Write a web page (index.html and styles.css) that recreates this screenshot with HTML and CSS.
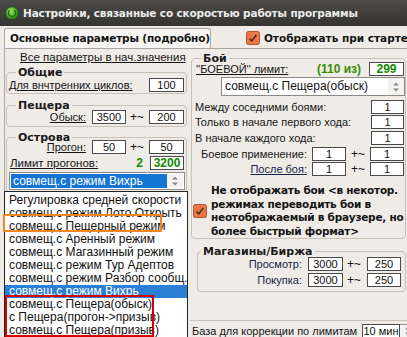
FILE: index.html
```html
<!DOCTYPE html>
<html lang="ru">
<head>
    <meta charset="UTF-8">
    <title>Настройки</title>
    <link rel="stylesheet" href="styles.css">
</head>
<body>
    <div class="titlebar">
        <svg class="app-icon" viewBox="0 0 14 14">
            <defs>
                <radialGradient id="ball" cx="40%" cy="35%" r="65%">
                    <stop offset="0" stop-color="#9be36a"/>
                    <stop offset="1" stop-color="#2d8c14"/>
                </radialGradient>
            </defs>
            <circle cx="7" cy="7" r="6.3" fill="url(#ball)" stroke="#1b560b" stroke-width="0.9"/>
            <path d="M4.6 4.2a3.6 3.6 0 1 0 4.8 0" fill="none" stroke="#1f6a0e" stroke-width="1.3"/>
        </svg>
        <span class="title">Настройки, связанные со скоростью работы программы</span>
    </div>

    <div class="window">
        <div class="tabs">
            <div class="tab">Основные параметры (подробно)</div>
            <div class="check check-start">
                <svg class="box" viewBox="0 0 14 14"><rect x=".5" y=".5" width="13" height="13" rx="2" fill="#ec7646" stroke="#b05530"/><path d="M3.6 7.4l2.1 2.6 4.6-6" fill="none" stroke="#4a3024" stroke-width="1.6"/></svg>
                <span>Отображать при старте</span>
            </div>
        </div>

        <div class="panel">
            <div class="col-left">
                <a class="reset">Все параметры в нач.значения</a>

                <div class="group g-common">
                    <div class="legend">Общие</div>
                    <div class="row row-common">
                        <span class="u">Для внчтренних циклов:</span>
                        <span class="field">100</span>
                    </div>
                </div>

                <div class="group g-cave">
                    <div class="legend">Пещера</div>
                    <div class="row row-pair">
                        <span class="lbl"><span class="u">Обыск:</span></span>
                        <span class="field">3500</span>
                        <span class="plus">+~</span>
                        <span class="field">200</span>
                    </div>
                </div>

                <div class="group g-isles">
                    <div class="legend">Острова</div>
                    <div class="row row-pair row-run">
                        <span class="lbl"><span class="u">Прогон:</span></span>
                        <span class="field">50</span>
                        <span class="plus">+~</span>
                        <span class="field">50</span>
                    </div>
                    <div class="row row-limit">
                        <span class="u">Лимит прогонов:</span>
                        <span class="green count">2</span>
                        <span class="field green">3200</span>
                    </div>
                    <div class="select select-blue">
                        <span class="select-text">совмещ.с режим Вихрь</span>
                        <span class="spin">
                            <svg viewBox="0 0 8 12"><path d="M1 4.5L4 1.5 7 4.5zM1 7.5L4 10.5 7 7.5z" fill="#8a8a8a"/></svg>
                        </span>
                    </div>
                </div>
            </div>

            <div class="col-right">
                <div class="group g-fight">
                    <div class="legend">Бой</div>
                    <div class="row row-fight">
                        <span class="u">''БОЕВОЙ'' лимит:</span>
                        <span class="olive">(110 из)</span>
                        <span class="field green">299</span>
                    </div>
                    <div class="select select-white">
                        <span class="select-text">совмещ.с Пещера(обыск)</span>
                        <span class="spin">
                            <svg viewBox="0 0 8 12"><path d="M1 4.5L4 1.5 7 4.5zM1 7.5L4 10.5 7 7.5z" fill="#8a8a8a"/></svg>
                        </span>
                    </div>
                    <div class="row row-one r1">
                        <span>Между соседними боями:</span>
                        <span class="field">1</span>
                    </div>
                    <div class="row row-one r2">
                        <span>Только в начале первого хода:</span>
                        <span class="field">1</span>
                    </div>
                    <div class="row row-one r3">
                        <span>В начале каждого хода:</span>
                        <span class="field">1</span>
                    </div>
                    <div class="row row-quad r3">
                        <span class="lbl">Боевое применение:</span>
                        <span class="field">1</span>
                        <span class="plus">+~</span>
                        <span class="field">1</span>
                    </div>
                    <div class="row row-quad r2">
                        <span class="lbl navy"><span class="u">После боя:</span></span>
                        <span class="field">1</span>
                        <span class="plus">+~</span>
                        <span class="field">1</span>
                    </div>
                    <div class="check check-fast">
                        <svg class="box" viewBox="0 0 14 14"><rect x=".5" y=".5" width="13" height="13" rx="2" fill="#ec7646" stroke="#b05530"/><path d="M3.6 7.4l2.1 2.6 4.6-6" fill="none" stroke="#4a3024" stroke-width="1.6"/></svg>
                        <span>Не отображать бои &lt;в некотор.<br>режимах переводить бои в<br>неотображаемый в браузере, но<br>более быстрый формат&gt;</span>
                    </div>
                </div>

                <div class="group g-shop">
                    <div class="legend">Магазины/Биржа</div>
                    <div class="row row-shop s1">
                        <span class="lbl navy">Просмотр:</span>
                        <span class="field">3000</span>
                        <span class="plus">+~</span>
                        <span class="field">250</span>
                    </div>
                    <div class="row row-shop s2">
                        <span class="lbl navy">Покупка:</span>
                        <span class="field">3000</span>
                        <span class="plus">+~</span>
                        <span class="field">250</span>
                    </div>
                </div>

                <div class="sep"></div>
                <div class="row row-base">
                    <span>База для коррекции по лимитам</span>
                    <span class="field">10 мин</span>
                    <span class="spin spin-base">
                        <svg viewBox="0 0 8 12"><path d="M1 4.5L4 1.5 7 4.5zM1 7.5L4 10.5 7 7.5z" fill="#8a8a8a"/></svg>
                    </span>
                </div>
            </div>
        </div>

        <!-- open dropdown of the "Острова" select -->
        <ul class="dropdown">
            <li>Регулировка средней скорости</li>
            <li>совмещ.с режим Лото.Открыть</li>
            <li>совмещ.с Пещерный режим</li>
            <li>совмещ.с Аренный режим</li>
            <li>совмещ.с Магазинный режим</li>
            <li>совмещ.с режим Тур Адептов</li>
            <li>совмещ.с режим Разбор сообщ.</li>
            <li class="active">совмещ.с режим Вихрь</li>
            <li>совмещ.с Пещера(обыск)</li>
            <li>с Пещера(прогон-&gt;призыв)</li>
            <li>совмещ.с Пещера(призыв)</li>
            <li class="mark mark-orange"></li>
            <li class="mark mark-red"></li>
        </ul>
    </div>
</body>
</html>
```

FILE: styles.css
```css
* {
    box-sizing: border-box;
}
body {
    margin: 0;
    width: 407px;
    height: 337px;
    overflow: hidden;
    background-color: #efece8;
    font-family: "Liberation Sans", Arial, sans-serif;
    font-size: 11px;
    color: #141414;
}
.titlebar {
    height: 26px;
    display: flex;
    align-items: center;
    gap: 4px;
    padding-left: 5px;
    background: linear-gradient(#4b4a47, #353432);
}
.app-icon {
    width: 14px;
    height: 14px;
}
.title {
    color: #ececec;
    font-family: "DejaVu Sans", sans-serif;
    font-weight: bold;
    font-size: 10.5px;
    letter-spacing: -0.15px;
    white-space: nowrap;
}
.window {
    position: relative;
    height: 311px;
    overflow: hidden;
}
.tabs {
    height: 22px;
    display: flex;
    align-items: flex-end;
    white-space: nowrap;
    overflow: hidden;
}
.tab {
    position: relative;
    z-index: 1;
    margin-left: 4px;
    margin-bottom: -1px;
    width: 213px;
    height: 21px;
    padding-left: 5px;
    border: 1px solid #aba79f;
    border-bottom: none;
    border-radius: 3px 3px 0 0;
    background-color: #f6f5f3;
    font-family: "DejaVu Sans", sans-serif;
    font-weight: bold;
    font-size: 10.5px;
    letter-spacing: -0.15px;
    line-height: 19px;
}
.check {
    display: flex;
    align-items: center;
    gap: 4px;
    font-family: "DejaVu Sans", sans-serif;
    font-weight: bold;
    font-size: 10.5px;
    white-space: nowrap;
}
.check .box {
    width: 14px;
    height: 14px;
    flex: none;
}
.check-start {
    align-self: center;
    margin-left: 35px;
    margin-top: 2px;
}
.panel {
    display: flex;
    margin-left: 4px;
    height: 289px;
    overflow: hidden;
    border-top: 1px solid #aba79f;
    border-left: 1px solid #aba79f;
}

/* left column */
.col-left {
    width: 185px;
    flex: none;
    padding-top: 2px;
}
.reset {
    display: block;
    height: 12px;
    line-height: 12px;
    padding-left: 15px;
    font-size: 11.5px;
    white-space: nowrap;
    text-decoration: underline;
}
.u {
    text-decoration: underline;
}
.group {
    padding: 0 2px;
    border: 1px solid #c6c2ba;
    border-radius: 4px;
}
.legend {
    display: table;
    margin: -6px 0 0 7px;
    padding: 0 2px;
    background-color: #efece8;
    font-family: "DejaVu Sans", sans-serif;
    font-weight: bold;
    font-size: 11px;
    line-height: 11px;
    color: #1a1a1a;
}
.row {
    display: grid;
    align-items: center;
    white-space: nowrap;
}
.field {
    display: block;
    height: 100%;
    background-color: #fff;
    border: 1px solid #4a4a4a;
    text-align: center;
    line-height: 12px;
    color: #111;
}
.plus {
    padding-left: 4px;
    font-size: 12px;
}
.lbl {
    text-align: right;
    padding-right: 6px;
}
.green {
    color: #108a00;
    font-weight: bold;
    font-size: 12px;
}
.olive {
    color: #3a8c00;
    font-weight: bold;
    font-size: 12px;
    padding-right: 8px;
}
.navy {
    color: #16234a;
}

.g-common {
    margin: 9px 3px 0 1px;
    padding-bottom: 1px;
}
.row-common {
    grid-template-columns: 1fr 35px;
    height: 14px;
}
.g-cave {
    margin: 11px 3px 0 1px;
    padding-bottom: 2px;
}
.row-pair {
    grid-template-columns: 1fr 34px 23px 35px;
    height: 14px;
    margin-top: -1px;
}
.g-isles {
    margin: 10px 3px 0 1px;
    padding-bottom: 150px;
}
.row-run {
    margin-top: -3px;
}
.row-limit {
    grid-template-columns: 1fr auto 34px;
    height: 13px;
    margin-top: 2px;
    padding-left: 1px;
}
.row-limit .u {
    font-size: 11.5px;
}
.count {
    padding-right: 7px;
}
.select {
    display: flex;
    align-items: stretch;
    height: 18px;
    border: 1px solid #8d8a85;
    background-color: #fff;
    white-space: nowrap;
}
.select-blue {
    margin: 3px -1px 0 0;
    padding: 1px;
}
.select-blue .select-text {
    background-color: #1475d5;
    color: #fff;
}
.select-text {
    flex: 1;
    padding-left: 2px;
    line-height: 15px;
    font-size: 12px;
}
.spin {
    width: 16px;
    display: flex;
    align-items: center;
    justify-content: center;
    background-color: #f4f3f1;
}
.spin svg {
    width: 8px;
    height: 12px;
}
.spin-base {
    height: 100%;
    border: 1px solid #9a9792;
    border-left: none;
}

/* right column */
.col-right {
    flex: 1;
    min-width: 0;
}
.g-fight {
    margin: 9px 1px 0 1px;
    padding: 0 1px 0 3px;
}
.g-fight .legend {
    margin-left: 6px;
}
.row-fight {
    grid-template-columns: 1fr auto 35px;
    height: 13px;
    margin-top: -2px;
    padding-left: 1px;
}
.select-white {
    height: 19px;
    margin: 2px -1px 0 26px;
}
.select-white .select-text {
    line-height: 17px;
    padding-left: 3px;
}
.row-one {
    grid-template-columns: 1fr 33px;
    height: 13px;
}
.row-quad {
    grid-template-columns: 1fr 34px 24px 34px;
    height: 13px;
}
.row-quad .lbl {
    padding-right: 5px;
}
.row-quad .plus {
    padding-left: 5px;
}
.r1 {
    margin-top: 4px;
}
.r2 {
    margin-top: 2px;
}
.r3 {
    margin-top: 3px;
}
.check-fast {
    margin: 9px 0 0 -2px;
    line-height: 13.5px;
    letter-spacing: -0.25px;
}

.g-shop {
    margin: 12px 1px 0 7px;
    padding: 0 4px 4px 2px;
}
.g-shop .legend {
    margin-left: 1px;
}
.row-shop {
    grid-template-columns: 1fr 35px 24px 34px;
    height: 14px;
}
.s2 {
    margin-top: 2px;
}
.sep {
    height: 1px;
    margin-top: 28px;
    background-color: #c6c2ba;
}
.row-base {
    grid-template-columns: 1fr 38px 14px;
    height: 14px;
    margin: 3px -7px 0 2px;
}

/* dropdown list */
.dropdown {
    position: absolute;
    left: 4px;
    top: 165px;
    width: 184px;
    height: 150px;
    margin: 0;
    padding: 2px 0 0 0;
    list-style: none;
    background-color: #fff;
    border: 1px solid #222;
    font-size: 12px;
}
.dropdown li {
    height: 13px;
    line-height: 13px;
    padding-left: 4px;
    white-space: nowrap;
    color: #111;
}
.dropdown li.active {
    background-color: #2a80d6;
    color: #fff;
}
.dropdown li.mark {
    position: absolute;
    padding: 0;
}
.mark-orange {
    left: -2px;
    top: 22px;
    width: 159px;
    height: 18px !important;
    border: 2px solid #f7861f;
}
.mark-red {
    left: 0;
    top: 103px;
    width: 149px;
    height: 42px !important;
    border: 2px solid #d80000;
}
```
